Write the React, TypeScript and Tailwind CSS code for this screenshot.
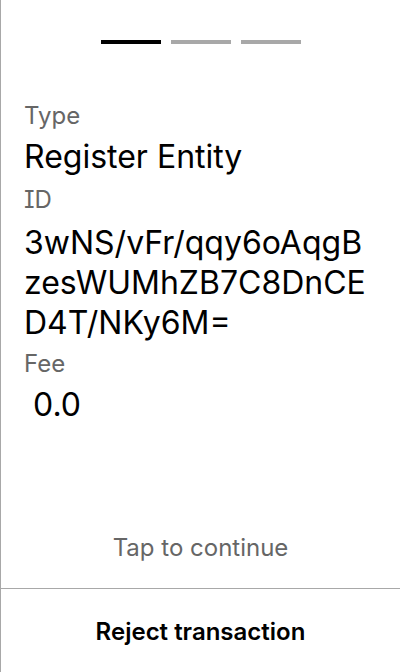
const ID_LINES = ['3wNS/vFr/qqy6oAqgB', 'zesWUMhZB7C8DnCE', 'D4T/NKy6M='];

export default function App() {
  const steps = [true, false, false];
  return (
    <div
      className="flex h-[672px] w-[400px] flex-col border-l border-[#a8a8a8] bg-white text-black"
      style={{ fontFamily: 'Inter, "Noto Sans", sans-serif' }}
    >
      {/* step indicator */}
      <div className="flex justify-center gap-[10px] pt-[40px] pl-[1px]">
        {steps.map((active, i) => (
          <div key={i} className={`h-[4px] w-[60px] ${active ? 'bg-black' : 'bg-[#a8a8a8]'}`} />
        ))}
      </div>

      <div className="flex-1 px-[23px] pt-[57px]">
        <div className="text-[24px] leading-[30px] text-[#666666]">Type</div>
        <div className="mt-[6px] text-[32px] leading-[40px]">Register Entity</div>

        <div className="mt-[8px] text-[24px] leading-[30px] text-[#666666] [font-feature-settings:'cv08']">ID</div>
        <div className="mt-[8px] text-[32px] leading-[40px]">
          {ID_LINES.map((l) => (
            <span key={l} className="block">
              {l}
            </span>
          ))}
        </div>

        <div className="mt-[6px] text-[24px] leading-[30px] text-[#666666]">Fee</div>
        <div className="mt-[6px] whitespace-pre text-[32px] leading-[40px]"> 0.0</div>
      </div>

      <div className="pb-[25px] text-center text-[24px] leading-[30px] text-[#666666]">Tap to continue</div>
      <button className="flex h-[84px] items-start justify-center border-t border-[#a8a8a8] pt-[28px] text-[24px] font-semibold leading-[30px]">
        Reject transaction
      </button>
    </div>
  );
}
